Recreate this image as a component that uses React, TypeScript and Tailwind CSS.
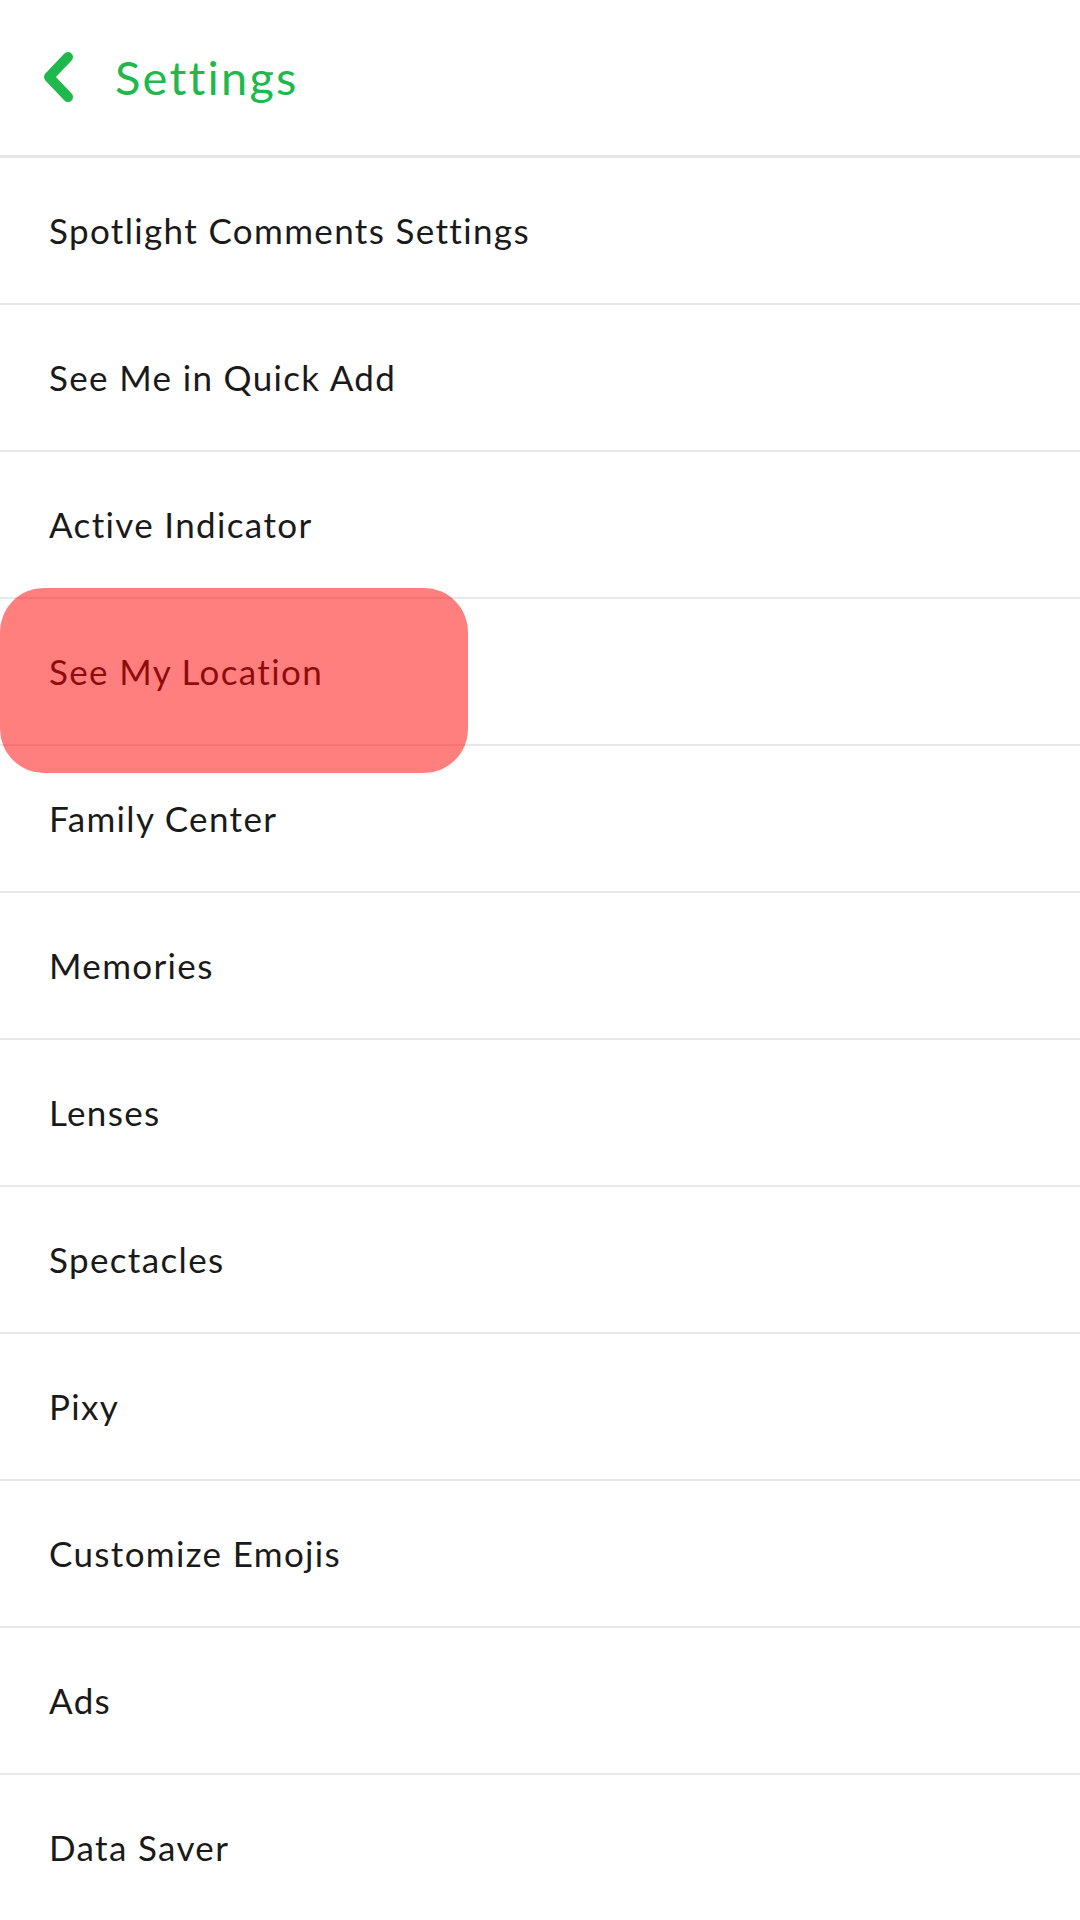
import React from 'react';

const items = [
  'Spotlight Comments Settings',
  'See Me in Quick Add',
  'Active Indicator',
  'See My Location',
  'Family Center',
  'Memories',
  'Lenses',
  'Spectacles',
  'Pixy',
  'Customize Emojis',
  'Ads',
  'Data Saver',
];

// the highlighted row gets a translucent red marker on top
const HIGHLIGHT = 'See My Location';

function Row({ label }: { label: string }) {
  return (
    <div className="relative flex h-[147px] items-center border-b-[2px] border-[#e8e8e8] pl-[49px]">
      <span className="text-[35px] tracking-[1.35px] text-[#1a1a1a]">{label}</span>
      {label === HIGHLIGHT && (
        <div className="absolute left-0 top-[-11px] h-[185px] w-[468px] rounded-[44px] bg-[#ff0000]/50" />
      )}
    </div>
  );
}

export default function App() {
  return (
    <div className="min-h-screen w-[1080px] overflow-hidden bg-white" style={{ fontFamily: 'Lato, "Noto Sans", sans-serif' }}>
      <div className="flex h-[158px] items-center border-b-[3px] border-[#e8e8e8] pl-[42px]">
        <svg width="32" height="50" viewBox="0 0 32 50" className="mr-[41px] -mt-[1px]">
          <path d="M26 5 L7 25 L26 45" fill="none" stroke="#1fb84c" strokeWidth="10" strokeLinecap="round" strokeLinejoin="round" />
        </svg>
        <span className="text-[47px] tracking-[2.2px] text-[#1fb84c]">Settings</span>
      </div>
      {items.map((label) => (
        <Row key={label} label={label} />
      ))}
    </div>
  );
}
